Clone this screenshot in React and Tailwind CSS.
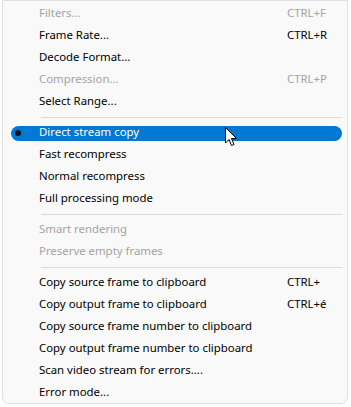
import React from "react";

const F = { fontFamily: '"Noto Sans", "Open Sans", sans-serif' };

function Row({ label, shortcut, disabled, selected, bullet }) {
  return (
    <div className="relative h-[22px] flex items-center">
      {selected && (
        <div className="absolute left-[8px] right-[5px] top-[5px] h-[15px] rounded-full bg-[#0078d4]" />
      )}
      {bullet && (
        <div className="absolute left-[12px] top-[9px] w-[6px] h-[6px] rounded-full bg-[#111]" />
      )}
      <span
        className={`relative pl-[36px] text-[11.4px] leading-none ${
          selected ? "text-white" : disabled ? "text-[#a3a3a3]" : "text-black"
        }`}
      >
        {label}
      </span>
      {shortcut && (
        <span
          className={`absolute left-[284px] text-[11.4px] leading-none ${
            disabled ? "text-[#a3a3a3]" : "text-black"
          }`}
        >
          {shortcut}
        </span>
      )}
    </div>
  );
}

function Sep() {
  return (
    <div className="h-[9px] pt-[5px]">
      <div className="ml-[38px] mr-[5px] h-px bg-[#d9d9d9]" />
    </div>
  );
}

export default function App() {
  return (
    <div className="w-[351px] h-[407px] bg-white relative overflow-hidden" style={F}>
      <div className="ml-[2px] w-[346px] h-[404px] bg-[#f9f9f9] border border-[#e0e0e0] rounded-b-[7px] pt-[1px]">
        <Row label="Filters..." shortcut="CTRL+F" disabled />
        <Row label="Frame Rate..." shortcut="CTRL+R" />
        <Row label="Decode Format..." />
        <Row label="Compression..." shortcut="CTRL+P" disabled />
        <Row label="Select Range..." />
        <Sep />
        <Row label="Direct stream copy" selected bullet />
        <Row label="Fast recompress" />
        <Row label="Normal recompress" />
        <Row label="Full processing mode" />
        <Sep />
        <Row label="Smart rendering" disabled />
        <Row label="Preserve empty frames" disabled />
        <Sep />
        <Row label="Copy source frame to clipboard" shortcut="CTRL+" />
        <Row label="Copy output frame to clipboard" shortcut="CTRL+é" />
        <Row label="Copy source frame number to clipboard" />
        <Row label="Copy output frame number to clipboard" />
        <Row label="Scan video stream for errors...." />
        <Row label="Error mode..." />
      </div>
      <svg className="absolute left-[225px] top-[127px]" width="14" height="21" viewBox="0 0 14 21">
        <path d="M0.5 0.5 L0.5 16 L4 12.5 L6.5 18.5 L9 17.5 L6.5 11.5 L11.5 11.5 Z" fill="white" stroke="black" strokeWidth="1" strokeLinejoin="miter" />
      </svg>
    </div>
  );
}
